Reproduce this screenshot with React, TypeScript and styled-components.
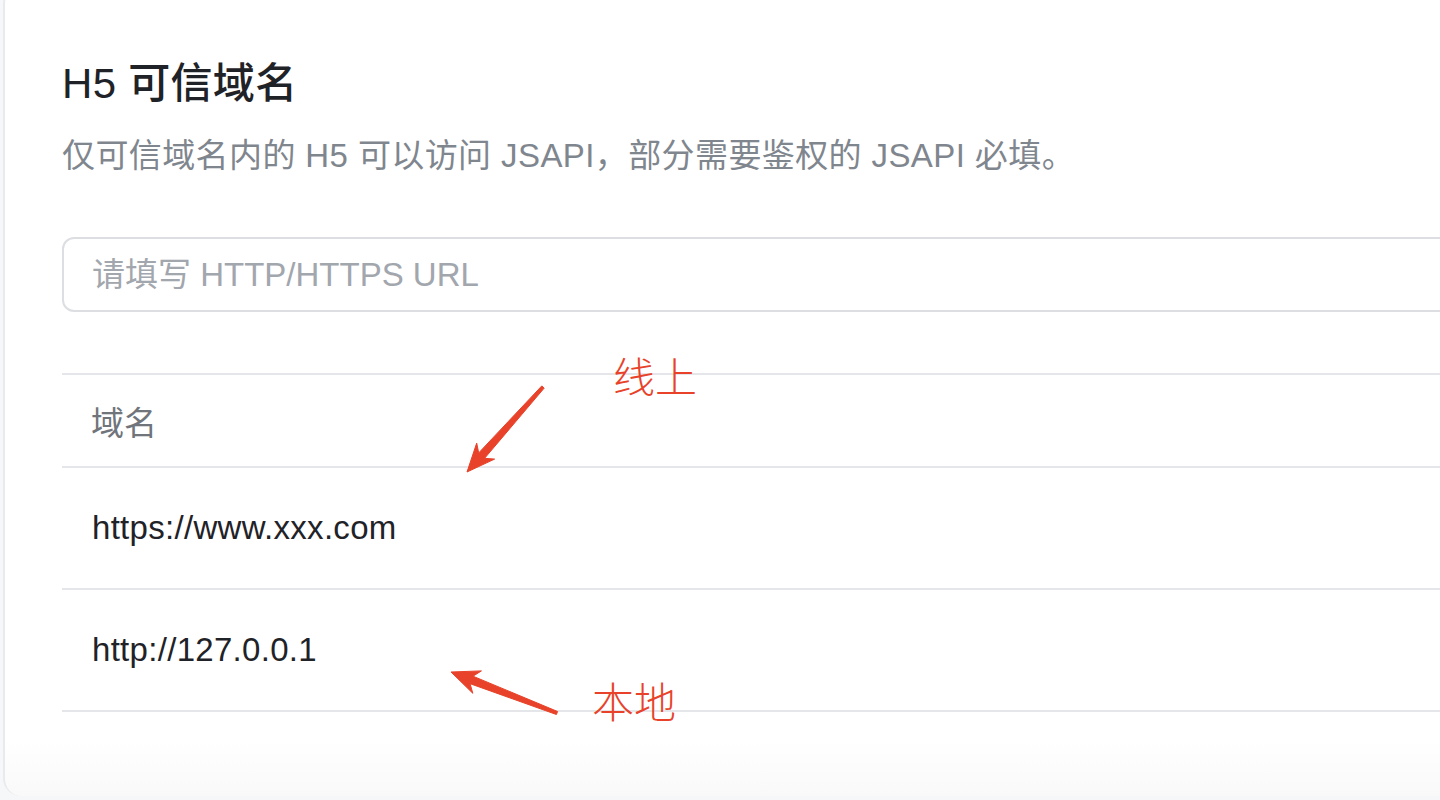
import React from "react";
import styled, { createGlobalStyle } from "styled-components";

const GlobalStyle = createGlobalStyle`
  html, body {
    margin: 0;
    padding: 0;
    height: 100%;
    overflow: hidden;
    background: #f6f7f8;
  }
  #root {
    height: 100%;
  }
`;

const fontStack = `"Liberation Sans", "Noto Sans CJK SC", sans-serif`;

type Pt = [number, number];

// tapered arrow: thin at the tail, thick near the head
const arrowPoints = (tail: Pt, tip: Pt) => {
  const dx = tip[0] - tail[0];
  const dy = tip[1] - tail[1];
  const len = Math.hypot(dx, dy);
  const ux = dx / len;
  const uy = dy / len;
  const nx = -uy;
  const ny = ux;
  const headLen = 28;
  const headHalf = 12;
  const at = (d: number, w: number): string =>
    `${(tip[0] - ux * d + nx * w).toFixed(1)},${(tip[1] - uy * d + ny * w).toFixed(1)}`;
  return [
    at(len, 1.6),
    at(headLen - 6, 4),
    at(headLen, headHalf),
    `${tip[0]},${tip[1]}`,
    at(headLen, -headHalf),
    at(headLen - 6, -4),
    at(len, -1.6),
  ].join(" ");
};

const domains = ["https://www.xxx.com", "http://127.0.0.1"];

const notes = [
  { text: "线上", left: 613, top: 354, tail: [543, 387] as Pt, tip: [467, 472] as Pt },
  { text: "本地", left: 592, top: 679, tail: [557, 713] as Pt, tip: [451, 672] as Pt },
];

export default function App() {
  return (
    <Page>
      <GlobalStyle />
      <Card>
        <Title>H5 可信域名</Title>
        <Description>
          仅可信域名内的 H5 可以访问 JSAPI，部分需要鉴权的 JSAPI 必填。
        </Description>
        <UrlInput placeholder="请填写 HTTP/HTTPS URL" />
        <Table>
          <HeaderRow>
            <HeaderCell>域名</HeaderCell>
          </HeaderRow>
          {domains.map((d) => (
            <Row key={d}>
              <Cell>{d}</Cell>
            </Row>
          ))}
        </Table>
      </Card>
      <Annotations width="1440" height="800" viewBox="0 0 1440 800">
        {notes.map((n) => (
          <polygon
            key={n.text}
            points={arrowPoints(n.tail, n.tip)}
            fill="#e8432a"
            stroke="#e8432a"
            strokeWidth="1"
            strokeLinejoin="round"
          />
        ))}
      </Annotations>
      {notes.map((n) => (
        <Note key={n.text} style={{ left: n.left, top: n.top }}>
          {n.text}
        </Note>
      ))}
    </Page>
  );
}

const Page = styled.div`
  position: relative;
  height: 100%;
  padding-left: 3px;
  overflow: hidden;
  font-family: ${fontStack};
`;

const Card = styled.div`
  box-sizing: border-box;
  width: 1500px;
  height: 810px;
  margin-top: -14px;
  padding: 73px 40px 0 57px;
  background: linear-gradient(to bottom, #ffffff 93%, #f9f9fa 100%);
  border-left: 2px solid #e9eaed;
  border-radius: 18px;
  display: flex;
  flex-direction: column;
`;

const Title = styled.h1`
  margin: 0;
  font-size: 42px;
  line-height: 50px;
  font-weight: 500;
  color: #1f2328;
  letter-spacing: 0.3px;
`;

const Description = styled.p`
  margin: 22px 0 0;
  font-size: 33px;
  line-height: 50px;
  color: #80868e;
  letter-spacing: 0.4px;
`;

const UrlInput = styled.input`
  box-sizing: border-box;
  margin-top: 56px;
  width: 100%;
  height: 75px;
  padding: 0 28px;
  border: 2px solid #dcdee2;
  border-radius: 12px;
  font-family: ${fontStack};
  font-size: 33px;
  color: #1f2328;
  background: #fff;
  outline: none;
  &::placeholder {
    color: #a2a6ad;
  }
`;

const Table = styled.div`
  margin-top: 61px;
  border-top: 2px solid #e4e6e9;
  display: flex;
  flex-direction: column;
`;

const HeaderRow = styled.div`
  height: 91px;
  display: flex;
  align-items: center;
  padding-left: 29px;
  border-bottom: 2px solid #e4e6e9;
`;

const HeaderCell = styled.span`
  font-size: 33px;
  color: #70757c;
`;

const Row = styled.div`
  height: 120px;
  display: flex;
  align-items: center;
  padding-left: 30px;
  border-bottom: 2px solid #e4e6e9;
`;

const Cell = styled.span`
  font-size: 33px;
  color: #1f2328;
  letter-spacing: 0.3px;
`;

const Annotations = styled.svg`
  position: absolute;
  left: 0;
  top: 0;
  pointer-events: none;
`;

const Note = styled.span`
  position: absolute;
  font-family: "Noto Sans CJK SC", sans-serif;
  font-size: 42px;
  line-height: 1;
  font-weight: 300;
  color: #e8432a;
  white-space: nowrap;
`;
